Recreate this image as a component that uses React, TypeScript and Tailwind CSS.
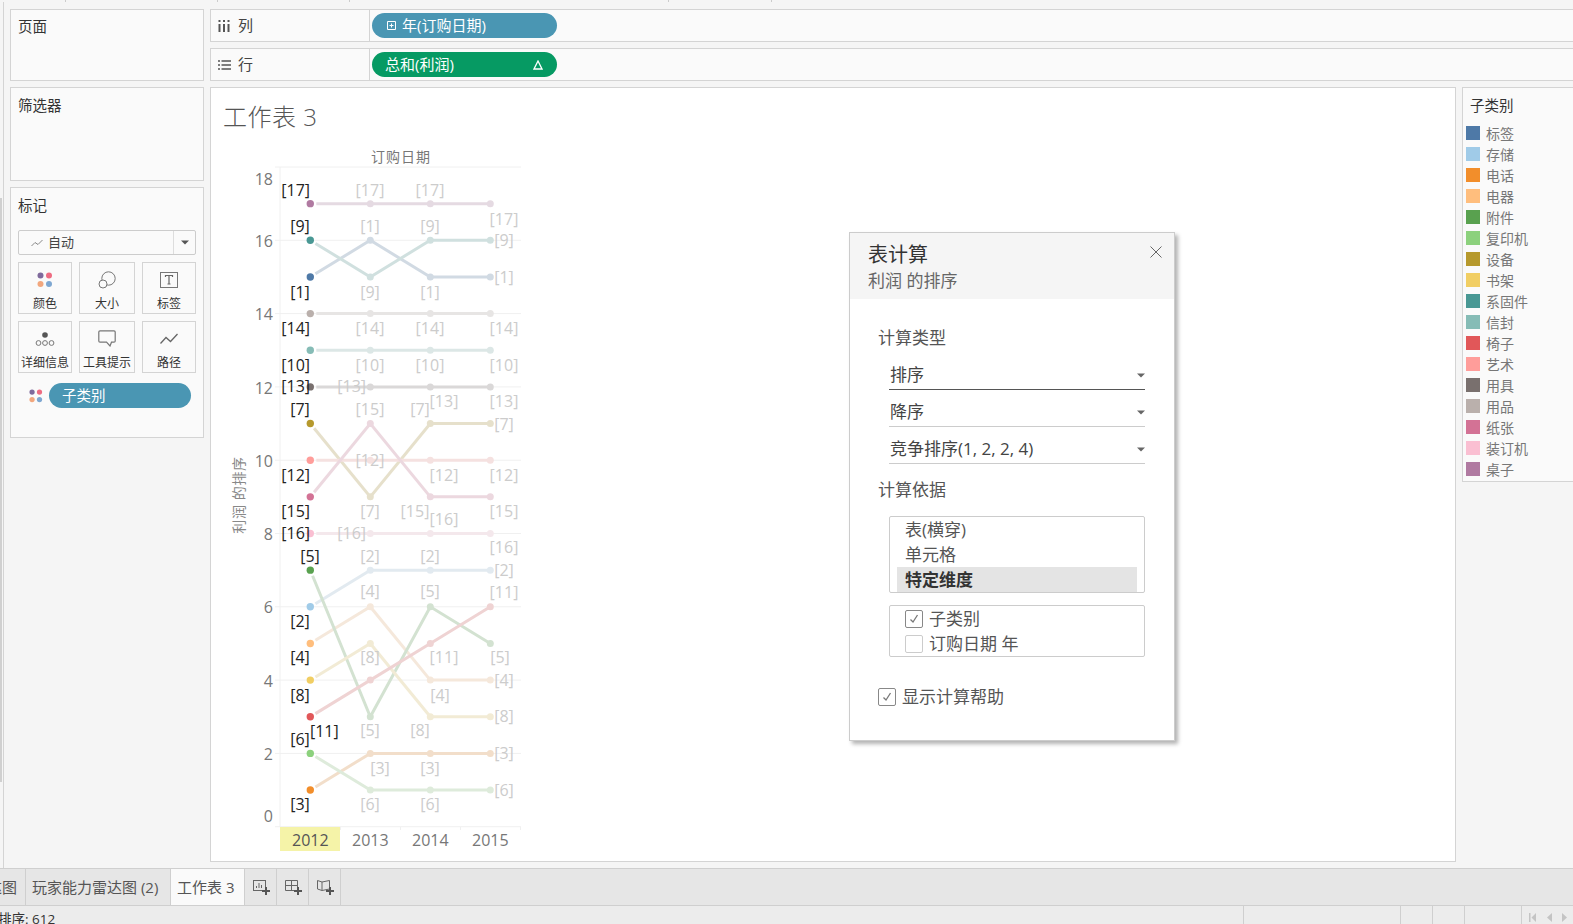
import React from "react";

const yOf = (v: number) => 826.7 - 36.65 * v;
const xs = [310.3, 370.3, 430.3, 490.3];

type Series = { name: string; color: string; vals: number[]; rank: number };
const series: Series[] = [
  { name: "标签", color: "#4e79a7", vals: [15, 16, 15, 15], rank: 1 },
  { name: "存储", color: "#a0cbe8", vals: [6, 7, 7, 7], rank: 2 },
  { name: "电话", color: "#f28e2b", vals: [1, 2, 2, 2], rank: 3 },
  { name: "电器", color: "#ffbe7d", vals: [5, 6, 4, 4], rank: 4 },
  { name: "附件", color: "#59a14f", vals: [7, 3, 6, 5], rank: 5 },
  { name: "复印机", color: "#8cd17d", vals: [2, 1, 1, 1], rank: 6 },
  { name: "设备", color: "#b6992d", vals: [11, 9, 11, 11], rank: 7 },
  { name: "书架", color: "#f1ce63", vals: [4, 5, 3, 3], rank: 8 },
  { name: "系固件", color: "#499894", vals: [16, 15, 16, 16], rank: 9 },
  { name: "信封", color: "#86bcb6", vals: [13, 13, 13, 13], rank: 10 },
  { name: "椅子", color: "#e15759", vals: [3, 4, 5, 6], rank: 11 },
  { name: "艺术", color: "#ff9d9a", vals: [10, 10, 10, 10], rank: 12 },
  { name: "用具", color: "#79706e", vals: [12, 12, 12, 12], rank: 13 },
  { name: "用品", color: "#bab0ac", vals: [14, 14, 14, 14], rank: 14 },
  { name: "纸张", color: "#d37295", vals: [9, 11, 9, 9], rank: 15 },
  { name: "装订机", color: "#fabfd2", vals: [8, 8, 8, 8], rank: 16 },
  { name: "桌子", color: "#b07aa1", vals: [17, 17, 17, 17], rank: 17 },
];

const blackLabels: [string, number, number][] = [
  ["[17]", 295.7, 190], ["[9]", 300, 226], ["[1]", 300, 292], ["[14]", 295.7, 328], ["[10]", 295.7, 365],
  ["[13]", 295.7, 386.7], ["[7]", 300, 409], ["[12]", 295.7, 475], ["[15]", 295.7, 511.7], ["[16]", 295.7, 533],
  ["[5]", 310, 556], ["[2]", 300, 621], ["[4]", 300, 657.7], ["[8]", 300, 695], ["[6]", 300, 739],
  ["[11]", 324.3, 731], ["[3]", 300, 804],
];

const greyLabels: [string, number, number][] = [
  ["[17]", 370, 190], ["[1]", 370, 226], ["[9]", 370, 292], ["[14]", 370, 328], ["[10]", 370, 365],
  ["[13]", 351.7, 386.7], ["[15]", 370, 409], ["[12]", 370, 460], ["[7]", 370, 511.7], ["[16]", 351.7, 533],
  ["[2]", 370, 556], ["[4]", 370, 591.7], ["[8]", 370, 657.7], ["[5]", 370, 730.7], ["[3]", 380, 768], ["[6]", 370, 804],
  ["[17]", 430, 190], ["[9]", 430, 226], ["[1]", 430, 292], ["[14]", 430, 328], ["[10]", 430, 365],
  ["[13]", 444, 401.7], ["[7]", 420, 409], ["[12]", 444, 475], ["[15]", 415, 511.7], ["[16]", 444, 519],
  ["[2]", 430, 556], ["[5]", 430, 591.7], ["[11]", 444, 657.7], ["[4]", 440, 695], ["[8]", 420, 730.7], ["[3]", 430, 768], ["[6]", 430, 804],
  ["[17]", 504, 219], ["[9]", 504, 240.7], ["[1]", 504, 277], ["[14]", 504, 328], ["[10]", 504, 365],
  ["[13]", 504, 401.7], ["[7]", 504, 424], ["[12]", 504, 475], ["[15]", 504, 511.7], ["[16]", 504, 547.7],
  ["[2]", 504, 570], ["[11]", 504, 592.3], ["[5]", 500, 657.7], ["[4]", 504, 680], ["[8]", 504, 716.7], ["[3]", 504, 753], ["[6]", 504, 790],
];

function fade(hex: string) {
  const n = parseInt(hex.slice(1), 16);
  const mix = (c: number) => Math.round(c * 0.2 + 242 * 0.8);
  return `rgb(${mix((n >> 16) & 255)},${mix((n >> 8) & 255)},${mix(n & 255)})`;
}

function linePath(vals: number[]) {
  const y = vals.map(yOf);
  const dx = xs[1] - xs[0];
  const dy = y[1] - y[0];
  const len = Math.hypot(dx, dy);
  const sx = xs[0] + (dx / len) * 6;
  const sy = y[0] + (dy / len) * 6;
  return `M${sx} ${sy} L${xs[1]} ${y[1]} L${xs[2]} ${y[2]} L${xs[3]} ${y[3]}`;
}

function Chart() {
  const grid = [18, 16, 14, 12, 10, 8, 6, 4, 2, 0];
  return (
    <svg viewBox="220 145 310 710" className="ml-[9px] block h-[710px] w-[310px]">
      {grid.map((g) => (
        <line key={g} x1={275} x2={521} y1={yOf(g)} y2={yOf(g)} stroke="#f0f0f0" strokeWidth={1} />
      ))}
      <line x1={280} x2={280} y1={167} y2={827} stroke="#f0f0f0" strokeWidth={1} />
      {[340.5, 400.5, 460.5, 520.5].map((x) => (
        <line key={x} x1={x} x2={x} y1={827} y2={830} stroke="#f0f0f0" strokeWidth={1} />
      ))}
      <text x={401} y={156.5} textAnchor="middle" dominantBaseline="central" fill="#777" className="text-[14px] tracking-[1px]">
        订购日期
      </text>
      <text transform="translate(238 495) rotate(-90)" textAnchor="middle" dominantBaseline="central" fill="#888" className="text-[14px] tracking-[0.6px]">
        利润 的排序
      </text>
      {[
        [18, 179], [16, 241.2], [14, 314], [12, 387.5], [10, 461], [8, 534], [6, 607.2], [4, 680.5], [2, 753.8], [0, 816.2],
      ].map(([t, y]) => (
        <text key={t} x={273} y={y} textAnchor="end" dominantBaseline="central" fill="#777" className="text-[16px]">
          {t}
        </text>
      ))}
      <rect x={280} y={827} width={60} height={24} fill="#f5f3a8" />
      {["2012", "2013", "2014", "2015"].map((t, i) => (
        <text key={t} x={xs[i]} y={840} textAnchor="middle" dominantBaseline="central" fill={i === 0 ? "#555" : "#777"} className="text-[16px]">
          {t}
        </text>
      ))}
      {series.map((s) => (
        <g key={s.name}>
          <path d={linePath(s.vals)} fill="none" stroke={fade(s.color)} strokeWidth={3} />
          {[1, 2, 3].map((i) => (
            <circle key={i} cx={xs[i]} cy={yOf(s.vals[i])} r={3.5} fill={fade(s.color)} />
          ))}
        </g>
      ))}
      {series.map((s) => (
        <circle key={s.name} cx={xs[0]} cy={yOf(s.vals[0])} r={3.7} fill={s.color} />
      ))}
      {greyLabels.map(([t, x, y], i) => (
        <text key={i} x={x} y={y - 0.5} textAnchor="middle" dominantBaseline="central" fill="#ccc" className="text-[16px]">
          {t}
        </text>
      ))}
      {blackLabels.map(([t, x, y], i) => (
        <text key={i} x={x} y={y - 0.5} textAnchor="middle" dominantBaseline="central" fill="#222" className="text-[16px]">
          {t}
        </text>
      ))}
    </svg>
  );
}

function ColorDots({ size = 16 }: { size?: number }) {
  return (
    <svg width={size} height={size} viewBox="0 0 16 16">
      <circle cx="3.5" cy="3.5" r="3" fill="#7f6a9c" />
      <circle cx="12" cy="3.5" r="3" fill="#ee6c82" />
      <circle cx="3.5" cy="12" r="3" fill="#f2a77e" />
      <circle cx="12" cy="12" r="3" fill="#7ea7d1" />
    </svg>
  );
}

function MarkButton({ label, icon }: { label: string; icon: React.ReactNode }) {
  return (
    <div className="flex h-full flex-col items-center border border-[#d4d4d4] bg-[#fafafa]">
      <div className="flex h-[34px] w-full items-center justify-center pt-[1px]">{icon}</div>
      <div className="text-[12px] leading-[18px] whitespace-nowrap text-[#333]">{label}</div>
    </div>
  );
}

function Shelf({ icon, label, children }: { icon: React.ReactNode; label: string; children: React.ReactNode }) {
  return (
    <div className="flex h-[33px] border border-r-0 border-[#d4d4d4] bg-[#fafafa]">
      <div className="flex w-[159px] items-center border-r border-[#d4d4d4] pl-[7px]">
        <div className="flex w-[20px] items-center">{icon}</div>
        <span className="text-[15px] text-[#444]">{label}</span>
      </div>
      <div className="flex items-center pl-[2px]">{children}</div>
    </div>
  );
}

function Caret({ color = "#666" }: { color?: string }) {
  return (
    <svg width="8" height="5" viewBox="0 0 8 5">
      <path d="M0 0.5H8L4 4.5Z" fill={color} />
    </svg>
  );
}

function SelectRow({ label, dark }: { label: string; dark?: boolean }) {
  return (
    <div className={`ml-[11px] flex h-[37px] w-[256px] items-center justify-between border-b pt-[8px] pr-0 pl-[1px] text-[17px] text-[#444] ${dark ? "border-[#555]" : "border-[#ccc]"}`}>
      <span>{label}</span>
      <Caret />
    </div>
  );
}

function Check({ checked }: { checked?: boolean }) {
  return (
    <span className={`flex h-[18px] w-[18px] shrink-0 items-center justify-center rounded-[2px] border ${checked ? "border-[#888]" : "border-[#ccc]"} bg-white`}>
      {checked && (
        <svg width="12" height="12" viewBox="0 0 12 12">
          <path d="M2.5 6.5L5 9L9.5 2" fill="none" stroke="#777" strokeWidth="1.3" />
        </svg>
      )}
    </span>
  );
}

function Dialog() {
  return (
    <div className="absolute top-[144px] left-[638px] h-[509px] w-[326px] border border-[#ccc] bg-white shadow-[3px_3px_4px_rgba(0,0,0,0.3)]">
      <div className="relative h-[66px] bg-[#f5f5f5] pt-[8px] pl-[18px]">
        <div className="text-[20px] leading-[28px] text-[#333]">表计算</div>
        <div className="text-[17px] leading-[23px] text-[#666]">利润 的排序</div>
        <svg className="absolute top-[13px] right-[12px]" width="12" height="12" viewBox="0 0 12 12">
          <path d="M0.5 0.5L11.5 11.5M11.5 0.5L0.5 11.5" stroke="#666" strokeWidth="1" />
        </svg>
      </div>
      <div className="pt-[27px] pl-[28px]">
        <div className="h-[24px] text-[17px] leading-[24px] text-[#555]">计算类型</div>
        <div className="mt-[3px]">
          <SelectRow label="排序" dark />
          <SelectRow label="降序" />
          <SelectRow label="竞争排序(1, 2, 2, 4)" />
        </div>
        <div className="mt-[14px] h-[24px] text-[17px] leading-[24px] text-[#555]">计算依据</div>
        <div className="mt-[14px] ml-[11px] h-[77px] w-[256px] rounded-[2px] border border-[#ccc] text-[17px] text-[#555]">
          <div className="pl-[15px] leading-[25px]">表(横穿)</div>
          <div className="pl-[15px] leading-[25px]">单元格</div>
          <div className="mx-[7px] bg-[#e4e4e4] pl-[8px] leading-[25px] font-bold text-[#333]">特定维度</div>
        </div>
        <div className="mt-[12px] ml-[11px] h-[52px] w-[256px] rounded-[2px] border border-[#ccc] pl-[15px] text-[17px] text-[#555]">
          <div className="flex h-[25px] items-center gap-[6px]">
            <Check checked />
            <span>子类别</span>
          </div>
          <div className="flex h-[25px] items-center gap-[6px]">
            <Check />
            <span>订购日期 年</span>
          </div>
        </div>
        <div className="mt-[27px] flex h-[25px] items-center gap-[6px] text-[17px] text-[#555]">
          <Check checked />
          <span>显示计算帮助</span>
        </div>
      </div>
    </div>
  );
}

function TabIcon({ kind }: { kind: "sheet" | "dash" | "story" }) {
  return (
    <svg width="18" height="16" viewBox="0 0 18 16" className="ml-[2px]">
      {kind === "sheet" && (
        <>
          <rect x="0.5" y="1.5" width="12" height="10" fill="none" stroke="#666" />
          <path d="M3.5 9V7M6 9V4M8.5 9V6" stroke="#666" />
        </>
      )}
      {kind === "dash" && <path d="M0.5 1.5H12.5V11.5H0.5ZM0.5 6.5H12.5M6.5 1.5V11.5" fill="none" stroke="#666" />}
      {kind === "story" && <path d="M0.5 1.5L5 3V11.5L0.5 10ZM5 3L12.5 1.5V10L5 11.5" fill="none" stroke="#666" />}
      <path d="M13 8V16M9 12H17" stroke="#555" strokeWidth="2" />
    </svg>
  );
}

function Tri({ d }: { d: string }) {
  return (
    <svg width="8" height="9" viewBox="0 0 8 9">
      <path d={d} fill="#c4c4c4" />
    </svg>
  );
}

export default function App() {
  return (
    <div className="flex h-[924px] w-[1573px] flex-col overflow-hidden bg-[#f5f5f5] font-['Open_Sans','Noto_Sans_CJK_SC',sans-serif]">
      <div className="flex h-[2px] shrink-0">
        <div className="w-[66px] border-r border-[#ccc]" />
        <div className="w-[152px] border-r border-[#ccc]" />
        <div className="w-[132px] border-r border-[#ccc]" />
        <div className="w-[319px] border-r border-[#ccc]" />
        <div className="w-[103px] border-r border-[#ccc]" />
      </div>
      <div className="flex h-[866px] shrink-0">
        <div className="w-[4px] shrink-0 border-r border-[#d4d4d4]">
          <div className="mt-[196px] ml-0 h-[584px] w-[2px] bg-[#d0d0d0]" />
        </div>
        <div className="ml-[6px] flex w-[194px] shrink-0 flex-col gap-[6px] pt-[7px]">
          <div className="h-[72px] border border-[#d4d4d4] bg-[#fafafa] pt-[6px] pl-[7px] text-[14.5px] leading-[22px] text-[#333]">页面</div>
          <div className="h-[94px] border border-[#d4d4d4] bg-[#fafafa] pt-[7px] pl-[7px] text-[14.5px] leading-[22px] text-[#333]">筛选器</div>
          <div className="h-[251px] border border-[#d4d4d4] bg-[#fafafa] px-[7px] pt-[7px]">
            <div className="text-[14.5px] leading-[22px] text-[#333]">标记</div>
            <div className="mt-[13px] flex h-[25px] w-[178px] items-center rounded-[2px] border border-[#ccc] bg-[#fafafa]">
              <div className="flex flex-1 items-center gap-[5px] pl-[12px] text-[13px] text-[#444]">
                <svg width="12" height="8" viewBox="0 0 12 8">
                  <path d="M0.5 7L4 3.5L7 5.5L11.5 1" fill="none" stroke="#888" />
                </svg>
                <span>自动</span>
              </div>
              <div className="flex h-full w-[22px] items-center justify-center border-l border-[#ddd]">
                <Caret color="#555" />
              </div>
            </div>
            <div className="mt-[7px] grid h-[111px] w-[178px] grid-cols-[54px_56px_54px] grid-rows-[52px_52px] gap-x-[7px] gap-y-[7px]">
              <MarkButton label="颜色" icon={<ColorDots />} />
              <MarkButton
                label="大小"
                icon={
                  <svg width="18" height="18" viewBox="0 0 18 18">
                    <circle cx="10.5" cy="7.5" r="6.7" fill="none" stroke="#777" />
                    <circle cx="5" cy="13" r="4" fill="#fafafa" stroke="#777" />
                  </svg>
                }
              />
              <MarkButton
                label="标签"
                icon={
                  <svg width="18" height="16" viewBox="0 0 18 16">
                    <rect x="0.5" y="0.5" width="17" height="15" fill="none" stroke="#777" />
                    <path d="M5.5 5V3.5H12.5V5M9 3.5V12M7.5 12H10.5" fill="none" stroke="#666" strokeWidth="1.2" />
                  </svg>
                }
              />
              <MarkButton
                label="详细信息"
                icon={
                  <svg width="20" height="16" viewBox="0 0 20 16">
                    <circle cx="10" cy="4" r="2.8" fill="#555" />
                    <circle cx="3.5" cy="12" r="2.4" fill="none" stroke="#777" />
                    <circle cx="10" cy="12" r="2.4" fill="none" stroke="#777" />
                    <circle cx="16.5" cy="12" r="2.4" fill="none" stroke="#777" />
                  </svg>
                }
              />
              <MarkButton
                label="工具提示"
                icon={
                  <svg width="18" height="17" viewBox="0 0 18 17">
                    <path d="M2 0.8H16C16.7 0.8 17.2 1.3 17.2 2V11C17.2 11.7 16.7 12.2 16 12.2H13.5L12 16L8.5 12.2H2C1.3 12.2 0.8 11.7 0.8 11V2C0.8 1.3 1.3 0.8 2 0.8Z" fill="none" stroke="#777" strokeWidth="1.2" />
                  </svg>
                }
              />
              <MarkButton
                label="路径"
                icon={
                  <svg width="18" height="12" viewBox="0 0 18 12">
                    <path d="M0.5 10.5L6 4.5L10.5 8.5L17.5 1" fill="none" stroke="#666" strokeWidth="1.3" />
                  </svg>
                }
              />
            </div>
            <div className="mt-[10px] flex items-center">
              <div className="ml-[11px] w-[20px]">
                <ColorDots size={14} />
              </div>
              <div className="flex h-[25px] w-[142px] items-center rounded-full bg-[#4a96b3] pl-[13px] text-[14.5px] text-white">子类别</div>
            </div>
          </div>
        </div>
        <div className="ml-[6px] flex min-w-0 flex-1 flex-col gap-[6px] pt-[7px]">
          <Shelf
            label="列"
            icon={
              <svg width="12" height="12" viewBox="0 0 12 12">
                <path d="M1.5 0V2M1.5 4V12M6 0V2M6 4V12M10.5 0V2M10.5 4V12" stroke="#555" strokeWidth="2" />
              </svg>
            }
          >
            <div className="flex h-[25px] w-[185px] items-center rounded-full bg-[#4a96b3] pl-[15px] text-[15px] text-white">
              <svg width="9" height="9" viewBox="0 0 9 9" className="mr-[6px]">
                <path d="M0.5 0.5H8.5V8.5H0.5ZM4.5 2.5V6.5M2.5 4.5H6.5" fill="none" stroke="#fff" />
              </svg>
              年(订购日期)
            </div>
          </Shelf>
          <Shelf
            label="行"
            icon={
              <svg width="13" height="10" viewBox="0 0 13 10">
                <path d="M0 1H2M3.5 1H13M0 5H2M3.5 5H13M0 9H2M3.5 9H13" stroke="#555" strokeWidth="1.6" />
              </svg>
            }
          >
            <div className="flex h-[25px] w-[185px] items-center justify-between rounded-full bg-[#069a63] pr-[14px] pl-[13px] text-[15px] text-white">
              <span>总和(利润)</span>
              <svg width="10" height="10" viewBox="0 0 10 10">
                <path d="M5 1L9 9H1Z" fill="none" stroke="#fff" strokeWidth="1.3" />
              </svg>
            </div>
          </Shelf>
          <div className="flex min-h-0 gap-[6px]">
            <div className="relative h-[775px] w-[1246px] shrink-0 border border-[#d4d4d4] bg-white">
              <div className="h-[57px] pt-[9px] pl-[12px] text-[24px] leading-[40px] font-light tracking-[0.5px] text-[#555]">工作表 3</div>
              <Chart />
              <Dialog />
            </div>
            <div className="h-[395px] w-[130px] shrink-0 overflow-hidden border border-[#d4d4d4] bg-[#fafafa]">
              <div className="flex h-[35px] items-center pl-[7px] text-[14.5px] text-[#333]">子类别</div>
              <div className="pt-[3px] pl-[3px]">
                {series.map((s) => (
                  <div key={s.name} className="flex h-[21px] items-start gap-[6px]">
                    <span className="h-[14px] w-[14px] shrink-0" style={{ backgroundColor: s.color }} />
                    <span className="text-[14px] leading-[15px] text-[#777]">{s.name}</span>
                  </div>
                ))}
              </div>
            </div>
          </div>
        </div>
      </div>
      <div className="flex h-[37px] shrink-0 border-t border-[#cfcfcf] bg-[#e6e6e6] text-[15px] text-[#555]">
        <div className="flex w-[26px] justify-end overflow-hidden border-r border-[#cfcfcf] pr-[8px] leading-[36px] whitespace-nowrap">雷达图</div>
        <div className="w-[145px] border-r border-[#cfcfcf] pl-[6px] leading-[36px] whitespace-nowrap">玩家能力雷达图 (2)</div>
        <div className="w-[74px] border-r border-[#cfcfcf] bg-[#fafafa] pl-[6px] leading-[36px] whitespace-nowrap">工作表 3</div>
        <div className="flex w-[32px] items-center justify-center border-r border-[#cfcfcf]"><TabIcon kind="sheet" /></div>
        <div className="flex w-[32px] items-center justify-center border-r border-[#cfcfcf]"><TabIcon kind="dash" /></div>
        <div className="flex w-[32px] items-center justify-center border-r border-[#cfcfcf]"><TabIcon kind="story" /></div>
      </div>
      <div className="flex h-[19px] shrink-0 overflow-hidden border-t border-[#cfcfcf] bg-[#ececec]">
        <div className="ml-[-2px] w-[1246px] border-r border-[#cfcfcf] text-[13.5px] leading-[26px] whitespace-nowrap text-[#333]">排序: 612</div>
        <div className="w-[157px] border-r border-[#cfcfcf]" />
        <div className="w-[32px] border-r border-[#cfcfcf]" />
        <div className="w-[32px] border-r border-[#cfcfcf]" />
        <div className="w-[57px] border-r border-[#cfcfcf]" />
        <div className="flex items-center gap-[8px] pt-[5px] pl-[7px]">
          <Tri d="M0 0H1.5V9H0ZM7 0V9L2.5 4.5Z" />
          <Tri d="M7 0V9L2 4.5Z" />
          <Tri d="M1 0V9L6 4.5Z" />
        </div>
      </div>
    </div>
  );
}
